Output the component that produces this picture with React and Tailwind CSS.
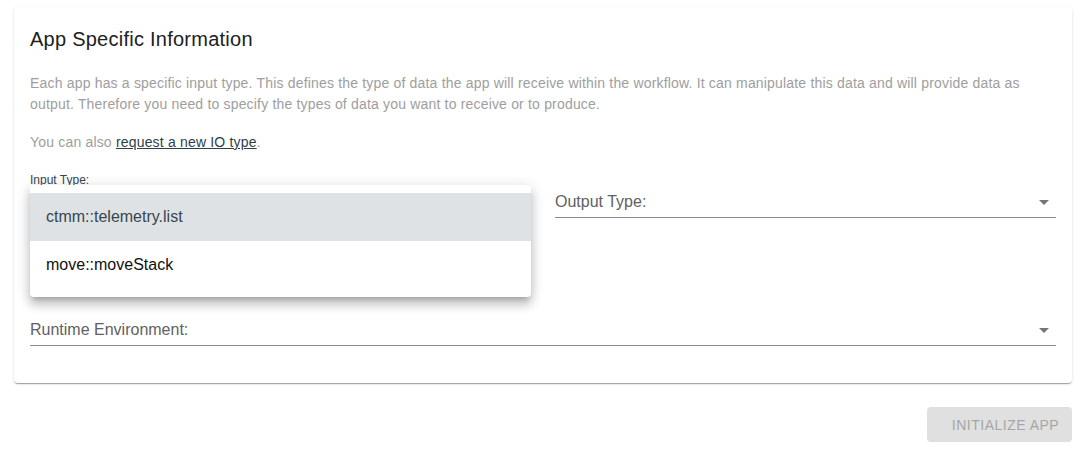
import { useState } from "react";

const font = { fontFamily: '"Liberation Sans", Arial, sans-serif' };

function DropArrow() {
  return (
    <svg viewBox="0 0 24 24" className="w-6 h-6 fill-[#757575]">
      <path d="M7 10l5 5 5-5z" />
    </svg>
  );
}

function SelectField({ label }) {
  return (
    <div className="pt-[16px]">
      <div className="relative h-[32px] flex items-center border-b border-[#8a8a8a]">
        <span className="text-[16px] text-[#616161] pt-[1px]">{label}</span>
        <div className="absolute right-0 top-[4px]">
          <DropArrow />
        </div>
      </div>
    </div>
  );
}

function OpenSelect({ label, options }) {
  const [active] = useState(0);
  return (
    <div className="relative">
      <div className="h-[16px] flex items-end">
        <span className="text-[12px] leading-[12px] text-[#37474f]">{label}</span>
      </div>
      <div className="h-[32px] border-b border-[#8a8a8a]" />
      <ul className="absolute left-0 top-[15px] w-full bg-white rounded py-2 z-10 shadow-[0px_5px_5px_-3px_rgba(0,0,0,0.2),0px_8px_10px_1px_rgba(0,0,0,0.14),0px_3px_14px_2px_rgba(0,0,0,0.12)]">
        {options.map((o, i) => (
          <li
            key={o}
            className={
              i === active
                ? "h-[48px] px-4 flex items-center text-[16px] bg-[#dee2e4] text-[#37474f]"
                : "h-[48px] px-4 flex items-center text-[16px] text-[#111]"
            }
          >
            {o}
          </li>
        ))}
      </ul>
    </div>
  );
}

export default function App() {
  return (
    <div className="bg-white min-h-[450px] px-[14px] pt-[7px]" style={font}>
      <div className="bg-white rounded px-4 pt-4 pb-[37px] shadow-[0px_2px_1px_-1px_rgba(0,0,0,0.2),0px_1px_1px_0px_rgba(0,0,0,0.14),0px_1px_3px_0px_rgba(0,0,0,0.12)]">
        <h2 className="text-[20px] leading-[32px] tracking-[0.25px] text-[#212121]">App Specific Information</h2>
        <p className="mt-[18px] text-[14px] leading-[21px] tracking-[0.18px] text-[#9e9e9e]">
          Each app has a specific input type. This defines the type of data the app will receive within the workflow. It
          can manipulate this data and will provide data as output. Therefore you need to specify the types of data you
          want to receive or to produce.
        </p>
        <p className="mt-[17px] text-[14px] leading-[21px] tracking-[0.18px] text-[#9e9e9e]">
          You can also{" "}
          <a href="#" className="underline text-[#2f3f4a]">
            request a new IO type
          </a>
          .
        </p>
        <div className="mt-[17px] grid grid-cols-2 gap-x-[24px]">
          <OpenSelect label="Input Type:" options={["ctmm::telemetry.list", "move::moveStack"]} />
          <SelectField label="Output Type:" />
        </div>
        <div className="mt-[80px]">
          <SelectField label="Runtime Environment:" />
        </div>
      </div>
      <div className="flex justify-end mt-[24px]">
        <button
          disabled
          className="h-[35px] w-[145px] rounded bg-[#e0e0e0] text-[14px] tracking-[0.5px] text-[#a6a6a6] uppercase pt-[2px] pl-[12px]"
        >
          Initialize App
        </button>
      </div>
    </div>
  );
}
